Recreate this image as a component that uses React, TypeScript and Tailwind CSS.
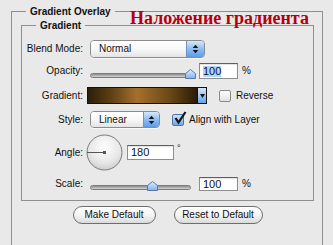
import clsx from 'clsx';

const Arrows = () => (
  <svg width="7" height="10" viewBox="0 0 7 10">
    <path d="M3.5 0.8 L6.3 4 L0.7 4 Z" fill="#151515" />
    <path d="M0.7 6 L6.3 6 L3.5 9.2 Z" fill="#151515" />
  </svg>
);

const Select = ({ value, className, arrowWidth }: { value: string; className: string; arrowWidth: string }) => (
  <div
    className={clsx(
      'flex overflow-hidden rounded-[4px] border border-[#8b8b8b] shadow-[0_1px_0_rgba(255,255,255,0.7)]',
      className,
    )}
  >
    <div className="flex flex-1 items-center bg-gradient-to-b from-white via-[#f8f8f8] to-[#e4e4e4] pl-[8px] text-[10px] leading-none">
      {value}
    </div>
    <div
      className={clsx(
        'flex items-center justify-center border-l border-[#6f92c4] bg-gradient-to-b from-[#d6e7fc] via-[#8fbcf1] to-[#5e9ce8]',
        arrowWidth,
      )}
    >
      <Arrows />
    </div>
  </div>
);

const Slider = ({ className, thumb }: { className: string; thumb: string }) => (
  <div className={clsx('relative h-full shrink-0', className)}>
    <div className="absolute inset-x-0 bottom-[1px] h-[5px] rounded-full border border-[#7c7c7c] bg-gradient-to-b from-[#8c8c8c] via-[#b0b0b0] to-[#d2d2d2]" />
    <svg className={clsx('absolute bottom-0', thumb)} width="11" height="10" viewBox="0 0 11 10">
      <defs>
        <linearGradient id="thumbFill" x1="0" y1="0" x2="0" y2="1">
          <stop offset="0" stopColor="#e2efff" />
          <stop offset="1" stopColor="#7fb2ee" />
        </linearGradient>
      </defs>
      <path d="M0.5 4.5 L5.5 0.5 L10.5 4.5 L10.5 9.5 L0.5 9.5 Z" fill="url(#thumbFill)" stroke="#5579a8" />
    </svg>
  </div>
);

const Field = ({ value, className, selected }: { value: string; className: string; selected?: boolean }) => (
  <div
    className={clsx(
      'flex items-center border border-[#8d8d8d] border-t-[#5f5f5f] bg-white pl-[3px] text-[11px] leading-none shadow-[inset_0_1px_1px_rgba(0,0,0,0.12)]',
      className,
    )}
  >
    <span className={clsx(selected && 'bg-[#b3d4fd]')}>{value}</span>
  </div>
);

const Checkbox = ({ checked }: { checked?: boolean }) => (
  <div className="relative h-[12px] w-[12px] shrink-0">
    <div
      className={clsx(
        'h-full w-full rounded-[2px] border',
        checked
          ? 'border-[#4d73a8] bg-gradient-to-b from-[#cfe3fb] to-[#6aa5ec]'
          : 'border-[#8a8a8a] bg-gradient-to-b from-white to-[#e2e2e2]',
      )}
    />
    {checked && (
      <svg className="absolute left-[1px] top-[-3px]" width="14" height="14" viewBox="0 0 14 14">
        <path d="M2.5 7 L5.5 11.5 L12.5 1" fill="none" stroke="#141414" strokeWidth="2.2" />
      </svg>
    )}
  </div>
);

const AngleDial = () => (
  <svg width="37" height="37" viewBox="0 0 37 37" className="shrink-0">
    <defs>
      <radialGradient id="dialFill" cx="0.5" cy="0.35" r="0.65">
        <stop offset="0" stopColor="#ffffff" />
        <stop offset="0.7" stopColor="#e6e6e6" />
        <stop offset="1" stopColor="#cdcdcd" />
      </radialGradient>
    </defs>
    <circle cx="18.5" cy="18.5" r="17.5" fill="url(#dialFill)" stroke="#7d7d7d" />
    <line x1="1" y1="18.5" x2="18.5" y2="18.5" stroke="#555" strokeWidth="1" />
    <rect x="17" y="17" width="3" height="3" fill="#555" />
  </svg>
);

const Label = ({ children }: { children: string }) => (
  <span className="w-[61px] shrink-0 text-right leading-none">{children}</span>
);

const PillButton = ({ children, className }: { children: string; className: string }) => (
  <button
    className={clsx(
      'h-[18px] rounded-full border border-[#6e6e6e] bg-gradient-to-b from-white via-[#f5f5f5] to-[#dadada] text-[10px] leading-none text-[#111]',
      className,
    )}
  >
    {children}
  </button>
);

export default function App() {
  return (
    <div className="relative h-[245px] w-[333px] overflow-hidden bg-[#e9e9e9] pt-[11px] font-['Liberation_Sans',Arial,sans-serif] text-[10px] text-[#111]">
      {/* outer group */}
      <div className="ml-[11px] h-[260px] w-[312px] border border-[#8f8f8f] pl-[9px] pr-[8px]">
        <div className="-mt-[7px] ml-[5px] w-fit bg-[#e9e9e9] px-[4px] text-[10px] font-bold leading-[13px]">
          Gradient Overlay
        </div>

        {/* inner group */}
        <div className="mt-[7px] border border-[#8f8f8f] pb-[9px]">
          <div className="-mt-[7px] ml-[14px] w-fit bg-[#e9e9e9] px-[4px] text-[10px] font-bold leading-[13px]">
            Gradient
          </div>

          <div className="mt-[8px] flex h-[18px] items-center">
            <Label>Blend Mode:</Label>
            <Select value="Normal" className="ml-[7px] h-full w-[115px]" arrowWidth="w-[18px]" />
          </div>

          <div className="mt-[5px] flex h-[16px] items-center">
            <Label>Opacity:</Label>
            <Slider className="ml-[7px] w-[104px]" thumb="left-[95px]" />
            <Field value="100" selected className="ml-[5px] h-full w-[39px]" />
            <span className="ml-[4px] leading-none">%</span>
          </div>

          <div className="mt-[8px] flex h-[17px] items-center">
            <Label>Gradient:</Label>
            <div className="ml-[4px] flex h-full w-[120px] border border-[#111]">
              <div className="flex-1 bg-[linear-gradient(90deg,#2b1e08_0%,#5e4114_22%,#a5702c_45%,#6b4817_75%,#2a1b06_100%)]" />
              <div className="flex w-[9px] items-center justify-center border-l border-[#111] bg-gradient-to-b from-[#d3e5fb] to-[#69a3ea]">
                <svg width="5" height="4" viewBox="0 0 5 4">
                  <path d="M0 0 L5 0 L2.5 4 Z" fill="#111" />
                </svg>
              </div>
            </div>
            <div className="ml-[12px]">
              <Checkbox />
            </div>
            <span className="ml-[5px] leading-none">Reverse</span>
          </div>

          <div className="mt-[7px] flex h-[17px] items-center">
            <Label>Style:</Label>
            <Select value="Linear" className="ml-[7px] h-full w-[70px]" arrowWidth="w-[16px]" />
            <div className="ml-[12px]">
              <Checkbox checked />
            </div>
            <span className="ml-[5px] leading-none">Align with Layer</span>
          </div>

          <div className="mt-[6px] flex h-[37px] items-center">
            <Label>Angle:</Label>
            <div className="ml-[3px]">
              <AngleDial />
            </div>
            <Field value="180" className="ml-[4px] h-[15px] w-[47px]" />
            <span className="mb-[8px] ml-[3px] text-[9px] leading-none">°</span>
          </div>

          <div className="mt-[6px] flex h-[14px] items-center">
            <Label>Scale:</Label>
            <Slider className="ml-[7px] w-[101px]" thumb="left-[57px]" />
            <Field value="100" className="ml-[8px] h-full w-[39px]" />
            <span className="ml-[4px] leading-none">%</span>
          </div>
        </div>

        <div className="mt-[5px] flex justify-center gap-[18px]">
          <PillButton className="w-[83px]">Make Default</PillButton>
          <PillButton className="w-[89px]">Reset to Default</PillButton>
        </div>
      </div>

      <span className="absolute left-[130px] top-[9px] font-['Liberation_Serif','Times_New_Roman',serif] text-[18px] font-bold leading-none text-[#b4000e]">
        Наложение градиента
      </span>
    </div>
  );
}
